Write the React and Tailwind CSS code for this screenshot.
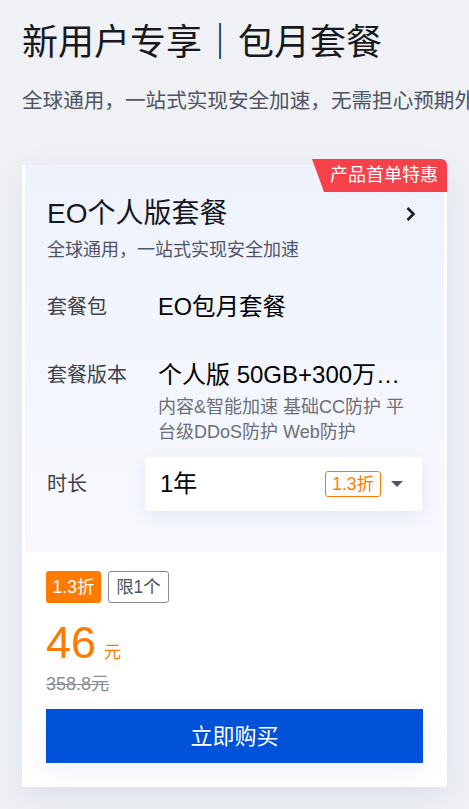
import React from "react";

const font = { fontFamily: '"Liberation Sans", "Noto Sans CJK SC", sans-serif' };

function Row({ label, children, top = "items-center" }) {
  return (
    <div className={`flex ${top}`}>
      <div className="w-[111px] shrink-0 text-[20px] leading-[32px] text-[#3e4148]">{label}</div>
      {children}
    </div>
  );
}

export default function App() {
  return (
    <div className="w-[469px] h-[809px] overflow-hidden bg-[#eff1f5]" style={font}>
      <div className="px-[22px] pt-[21px]">
        <h1 className="text-[36px] leading-[44px] text-[#16181d] font-normal whitespace-nowrap">
          新用户专享｜包月套餐
        </h1>
        <p className="mt-[22px] text-[20.6px] leading-[28px] text-[#4f5564] whitespace-nowrap">
          全球通用，一站式实现安全加速，无需担心预期外的流量费用
        </p>
      </div>

      <div className="relative mx-[22px] mt-[50px] bg-white shadow-[0_10px_30px_rgba(60,80,140,0.10)]">
        <div className="absolute top-[-6px] right-0 h-[33px] w-[135px] bg-[#f5424a] rounded-tr-[6px] [clip-path:polygon(0_0,100%_0,100%_100%,12px_100%)] flex items-center justify-end pr-[9px] text-[18px] text-white">
          产品首单特惠
        </div>

        <div className="mx-[3px] pt-[31px] px-[22px] pb-[41px] bg-gradient-to-b from-[#edf2fc] to-[#f8f9fe]">
          <div className="flex items-center justify-between">
            <div className="text-[28px] leading-[36px] text-[#16181d]">EO个人版套餐</div>
            <svg width="12" height="16" viewBox="0 0 12 16" className="mr-[5px]">
              <path d="M2.5 2 L8.5 8 L2.5 14" fill="none" stroke="#1c1e24" strokeWidth="2.6" />
            </svg>
          </div>
          <div className="mt-[6px] text-[18px] leading-[24px] text-[#4f5564]">全球通用，一站式实现安全加速</div>

          <div className="mt-[29px]">
            <Row label="套餐包">
              <div className="text-[23.5px] leading-[32px] text-black">EO包月套餐</div>
            </Row>
          </div>

          <div className="mt-[36px]">
            <Row label="套餐版本" top="items-start">
              <div className="w-[252px]">
                <div className="text-[24px] leading-[32px] text-black truncate">个人版 50GB+300万次请求</div>
                <div className="mt-[4px] text-[18px] leading-[25px] text-[#6b6e76] whitespace-nowrap">
                  内容&智能加速 基础CC防护 平<br />台级DDoS防护 Web防护
                </div>
              </div>
            </Row>
          </div>

          <div className="mt-[12px] flex items-center">
            <div className="w-[98px] shrink-0 text-[20px] leading-[32px] text-[#3e4148]">时长</div>
            <div className="w-[278px] h-[54px] bg-white rounded-[4px] shadow-[0_6px_18px_rgba(60,90,160,0.10)] flex items-center pl-[15px] pr-[19px]">
              <div className="flex-1 text-[24px] text-black">1年</div>
              <div className="h-[26px] px-[6px] flex items-center border border-[#ff7a00] rounded-[3px] text-[17.5px] text-[#ff7a00]">
                1.3折
              </div>
              <svg width="12" height="6" viewBox="0 0 12 6" className="ml-[10px]">
                <path d="M0 0 L12 0 L6 6 Z" fill="#4e5566" />
              </svg>
            </div>
          </div>
        </div>

        <div className="px-[24px] pt-[19px] pb-[24px]">
          <div className="flex gap-[7px]">
            <div className="h-[32px] w-[55px] flex items-center justify-center rounded-[3px] bg-[#ff7a00] text-[17.5px] text-white">
              1.3折
            </div>
            <div className="h-[32px] w-[61px] flex items-center justify-center rounded-[3px] border border-[#8a8c92] text-[17.5px] text-[#4f5564]">
              限1个
            </div>
          </div>
          <div className="mt-[16px] flex items-baseline text-[#ff7a00]">
            <span className="text-[45px] leading-[48px]">46</span>
            <span className="ml-[8px] text-[17px]">元</span>
          </div>
          <div className="mt-[5px] text-[18px] leading-[24px] text-[#8a8c92] line-through">358.8元</div>
          <button className="mt-[13px] w-full h-[54px] bg-[#0052d9] text-white text-[22px] shadow-[0_8px_24px_rgba(0,82,217,0.08)]">
            立即购买
          </button>
        </div>
      </div>
    </div>
  );
}
